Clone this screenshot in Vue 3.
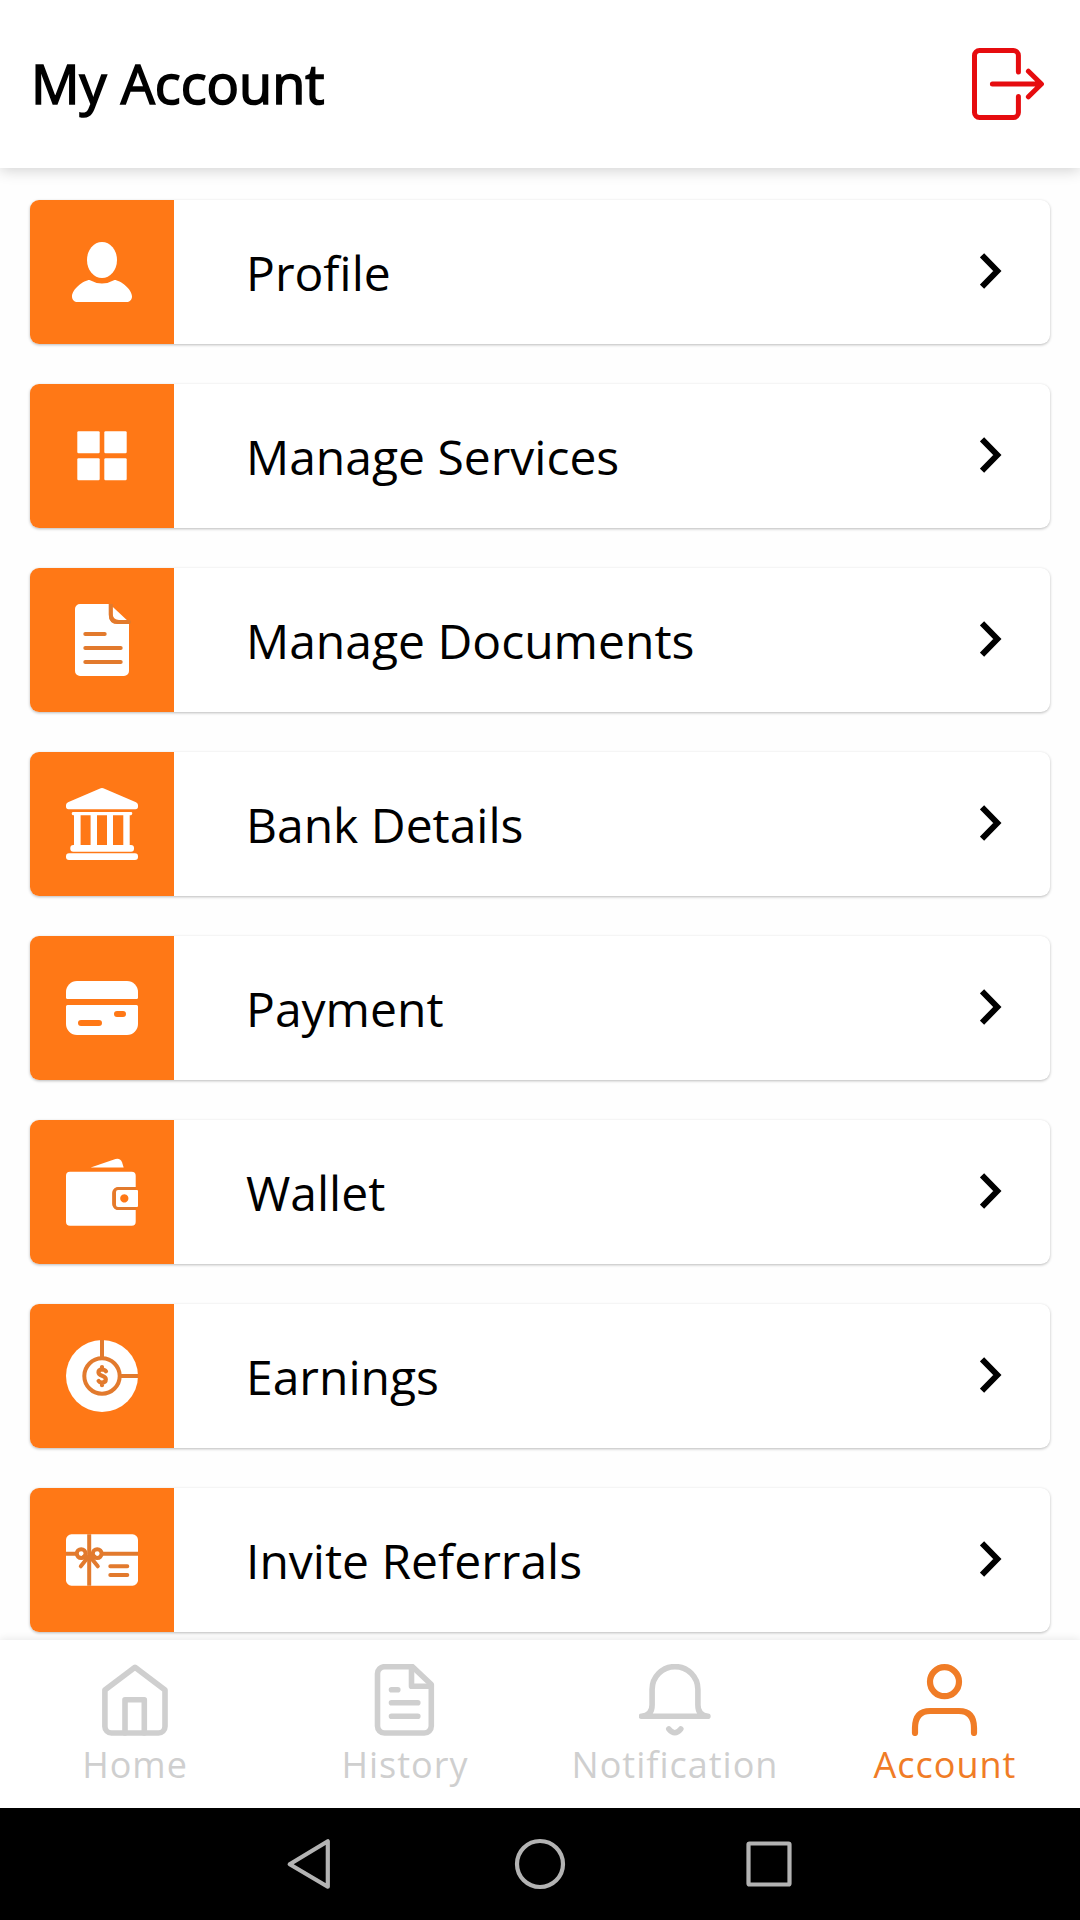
<script setup>
import { ref } from 'vue'

const activeTab = ref('Account')

const menu = ref([
  { id: 'profile', title: 'Profile' },
  { id: 'services', title: 'Manage Services' },
  { id: 'documents', title: 'Manage Documents' },
  { id: 'bank', title: 'Bank Details' },
  { id: 'payment', title: 'Payment' },
  { id: 'wallet', title: 'Wallet' },
  { id: 'earnings', title: 'Earnings' },
  { id: 'invite', title: 'Invite Referrals' },
])

const tabs = ['Home', 'History', 'Notification', 'Account']
</script>

<template>
  <div class="screen">
    <header>
      <h1>My Account</h1>
      <button class="logout" aria-label="Logout">
        <svg viewBox="0 0 72 72" class="line">
          <path d="M46.4 24V7.5a5 5 0 0 0-5-5H7.5a5 5 0 0 0-5 5v57a5 5 0 0 0 5 5h33.9a5 5 0 0 0 5-5V48.5" />
          <path d="M20.4 36H69M56.4 23.2 69.4 36 56.4 48.8" />
        </svg>
      </button>
    </header>

    <main>
      <div class="card" v-for="item in menu" :key="item.id">
        <div class="tile">
          <svg viewBox="0 0 72 72">
            <g v-if="item.id === 'profile'">
              <ellipse cx="36" cy="24" rx="15" ry="18" />
              <path d="M23.5 44C18 44 6 53 6 60.5c0 3.5 2.5 5.5 5.5 5.5h49c3 0 5.5-2 5.5-5.5C66 53 54 44 48.5 44Q36 51 23.5 44z" />
            </g>
            <g v-else-if="item.id === 'services'">
              <rect x="11.3" y="11.3" width="22.4" height="22" rx="1.2" />
              <rect x="38.3" y="11.3" width="22.4" height="22" rx="1.2" />
              <rect x="11.3" y="38.2" width="22.4" height="22" rx="1.2" />
              <rect x="38.3" y="38.2" width="22.4" height="22" rx="1.2" />
            </g>
            <g v-else-if="item.id === 'documents'">
              <path d="M14 0H43V10.5Q43 20 52 20H63V67a5 5 0 0 1-5 5H14a5 5 0 0 1-5-5V5a5 5 0 0 1 5-5z" />
              <path d="M46.6 2.8 60.8 16H53Q46.6 16 46.6 9.5z" />
              <path class="cut" d="M44.7 0V10.5Q44.7 18 52 18H63M19.3 30h19.4M19.3 44h35.4M19.3 58h35.4" />
            </g>
            <g v-else-if="item.id === 'bank'">
              <path d="M33.5.7Q36-.6 38.5.7L70 14.2Q72 15.2 72 17v1.5Q72 21.3 69.5 21.3h-67Q0 21.3 0 18.5V17Q0 15.2 2 14.2z" />
              <path d="M7 24h58q1.3 0 1.3 1.3T65 27.3h-1.3V57.5H57.3V27.3H47V57.5H41V27.3H31V57.5H24.6V27.3H14.6V57.5H8V27.3H7q-1.3 0-1.3-1.7T7 24z" />
              <rect x="4.3" y="57" width="63.7" height="6.7" rx="3" />
              <rect x="0" y="65.2" width="72" height="6.8" rx="3" />
            </g>
            <g v-else-if="item.id === 'payment'">
              <path d="M11 9h50a11 11 0 0 1 11 11v5.5q0 1.5-1.5 1.5h-69Q0 27 0 25.5V20A11 11 0 0 1 11 9z" />
              <path fill-rule="evenodd" d="M1.5 33h69q1.5 0 1.5 1.5V52a11 11 0 0 1-11 11H11A11 11 0 0 1 0 52V34.5Q0 33 1.5 33zM51 39a3 3 0 0 0 0 6h6a3 3 0 0 0 0-6zM15 48a3 3 0 0 0 0 6h18a3 3 0 0 0 0-6z" />
            </g>
            <g v-else-if="item.id === 'wallet'">
              <path d="M24.7 11.4 49.5 2.9Q54.5 1.8 56 6.2L57.7 11.4z" />
              <path d="M4 15.7h61.7a4 4 0 0 1 4 4V31H52a5.7 5.7 0 0 0-5.7 5.7v11.6A5.7 5.7 0 0 0 52 54H69.7V65.7a4 4 0 0 1-4 4H4a4 4 0 0 1-4-4v-46a4 4 0 0 1 4-4z" />
              <path d="M69.7 32.5H53a5 5 0 0 0-5 5v10a5 5 0 0 0 5 5H69.7" class="cut thin" />
              <path fill-rule="evenodd" d="M52 34h19q1 0 1 1v15q0 1-1 1H52q-2-.2-2-2V36q0-1.800 2-2zM58.300 38.300a4.100 4.100 0 1 0 .010 0z" />
            </g>
            <g v-else-if="item.id === 'earnings'">
              <circle cx="36" cy="36" r="36" />
              <circle class="cut flat" cx="36" cy="36" r="17.7" />
              <path class="cut flat" d="M36 0v18M54 36h18" />
              <path class="cut dollar" d="M36 27v2.6M36 42.5v2.700M40 31.300Q38.800 29.500 36 29.500 32.500 29.500 32.500 32.300 32.500 34.700 36 35.700 39.800 36.800 39.800 39.300 39.800 42.500 36 42.500 33.500 42.500 32.600 41" />
            </g>
            <g v-else>
              <rect x="0" y="10.3" width="72" height="51.4" rx="5.5" />
              <path class="cut flat" d="M23.2 10.3v51.4M0 29.8h10M37 29.8h35" />
              <circle class="cut" cx="15.2" cy="29.6" r="4.4" />
              <circle class="cut" cx="31.2" cy="29.6" r="4.4" />
              <path class="cut" d="M18 32.5 23.2 33.5 28.5 32.5M21 34.5 14.8 42.3M25.5 34.5 31.8 42.3" />
              <path class="cut" d="M44.3 42.3h17M44.3 50.9h17" />
            </g>
          </svg>
        </div>
        <span class="label">{{ item.title }}</span>
        <svg class="chevron" viewBox="0 0 22 36">
          <path d="M2 2.3 17.3 18 2 33.7" />
        </svg>
      </div>
    </main>

    <nav>
      <a v-for="tab in tabs" :key="tab" :class="{ active: tab === activeTab }" @click="activeTab = tab">
        <svg viewBox="0 0 72 72" class="line">
          <g v-if="tab === 'Home'">
            <path d="M36 3.3 5.9 26V62.5a6.5 6.5 0 0 0 6.5 6.5H59.5a6.5 6.5 0 0 0 6.5-6.5V26z" />
            <path d="M26 69V35.8H45.3V69" />
          </g>
          <g v-else-if="tab === 'History'">
            <path d="M15 2.7H43.5L62.3 20.5V62a7 7 0 0 1-7 7H15.5a7 7 0 0 1-7-7V9.7a7 7 0 0 1 7-7z" />
            <path d="M42.5 3V22.3H62.3M22.5 25.7h6.3M22.5 38.7h26.3M22.5 52.3h26.3" />
          </g>
          <g v-else-if="tab === 'Notification'">
            <path d="M2.5 52.2H68.9Q58.9 51.5 58.9 41V25.5a22.9 22.9 0 0 0-45.8 0V41Q13.1 51.5 2.5 52.2z" />
            <path d="M29.8 65Q35.8 72.5 41.8 65" />
          </g>
          <g v-else class="bold">
            <circle cx="35.500" cy="17.700" r="14.500" />
            <path d="M6 69V64Q6 47 21.300 47H49.800Q65 47 65 64V69" />
          </g>
        </svg>
        <span>{{ tab }}</span>
      </a>
    </nav>

    <!-- android system buttons -->
    <footer>
      <svg viewBox="0 0 560 112">
        <path d="M29.7 56.2 67.8 33.3V78.7z" />
        <circle cx="280" cy="56" r="23" />
        <rect x="488.500" y="35.500" width="41" height="41" rx="1" />
      </svg>
    </footer>
  </div>
</template>

<style>
body {
  margin: 0;
  background: #fefefe;
}
</style>

<style scoped>
.screen {
  display: flex;
  flex-direction: column;
  width: 1080px;
  height: 1920px;
  overflow: hidden;
  background: #fefefe;
  font-family: "Open Sans", "Noto Sans", sans-serif;
  color: #000;
}

header {
  flex: none;
  height: 168px;
  box-sizing: border-box;
  padding: 0 36px 2px 31px;
  display: flex;
  align-items: center;
  justify-content: space-between;
  background: #fff;
  box-shadow: 0 2px 14px rgba(0,0,0,0.19);
  z-index: 1;
}
h1 {
  margin: 0;
  font-size: 54px;
  font-weight: 400;
  line-height: 74px;
  -webkit-text-stroke: 1.6px #000;
}
.logout {
  border: none;
  background: none;
  padding: 0;
  height: 72px;
  margin-top: 2px;
  color: #e60c0f;
}
.logout svg {
  display: block;
  width: 72px;
  height: 72px;
  stroke-width: 5;
}
.line {
  fill: none;
  stroke: currentColor;
  stroke-linecap: round;
  stroke-linejoin: round;
}

main {
  flex: 1;
  min-height: 0;
  overflow: hidden;
  padding: 32px 30px 0;
}
.card {
  display: flex;
  align-items: center;
  height: 144px;
  margin-bottom: 40px;
  padding-right: 48px;
  border-radius: 9px;
  background: #fff;
  box-shadow: 0 1px 3px rgba(0,0,0,0.27);
}
.tile {
  width: 144px;
  height: 144px;
  display: flex;
  align-items: center;
  justify-content: center;
  border-radius: 9px 0 0 9px;
  background: #ff7816;
}
.tile svg {
  width: 72px;
  height: 72px;
  fill: #fff;
}
.cut {
  fill: none;
  stroke: #e27a2d;
  stroke-width: 4;
  stroke-linecap: round;
  stroke-linejoin: round;
}
.thin {
  stroke-width: 3.2;
  stroke-linecap: butt;
}
.flat {
  stroke-linecap: butt;
}
.dollar {
  stroke-width: 4.2;
}
circle.cut:not(.flat) {
  fill: #fff;
}
.label {
  flex: 1;
  padding: 2px 0 0 72px;
  font-size: 48px;
  line-height: 66px;
}
.chevron {
  width: 22px;
  height: 36px;
  margin-bottom: 2px;
  fill: none;
  stroke: #000;
  stroke-width: 6;
}

nav {
  flex: none;
  display: grid;
  grid-template-columns: repeat(4, 1fr);
  height: 168px;
  background: #fff;
  box-shadow: 0 -1px 8px rgba(0,0,0,0.09);
  z-index: 1;
}
nav a {
  display: flex;
  flex-direction: column;
  align-items: center;
  padding-top: 24px;
  color: #cfcfcf;
}
nav svg {
  width: 72px;
  height: 72px;
  stroke-width: 5.6;
}
nav .bold {
  stroke-width: 6.2;
}
nav span {
  margin-top: 4px;
  font-size: 36px;
  line-height: 49px;
  letter-spacing: 1px;
}
nav .active {
  color: #f07c26;
}

footer {
  flex: none;
  height: 112px;
  display: flex;
  justify-content: center;
  background: #000;
}
footer svg {
  width: 560px;
  height: 112px;
  fill: none;
  stroke: #b3b3b3;
  stroke-width: 4.2;
  stroke-linejoin: round;
}
</style>
